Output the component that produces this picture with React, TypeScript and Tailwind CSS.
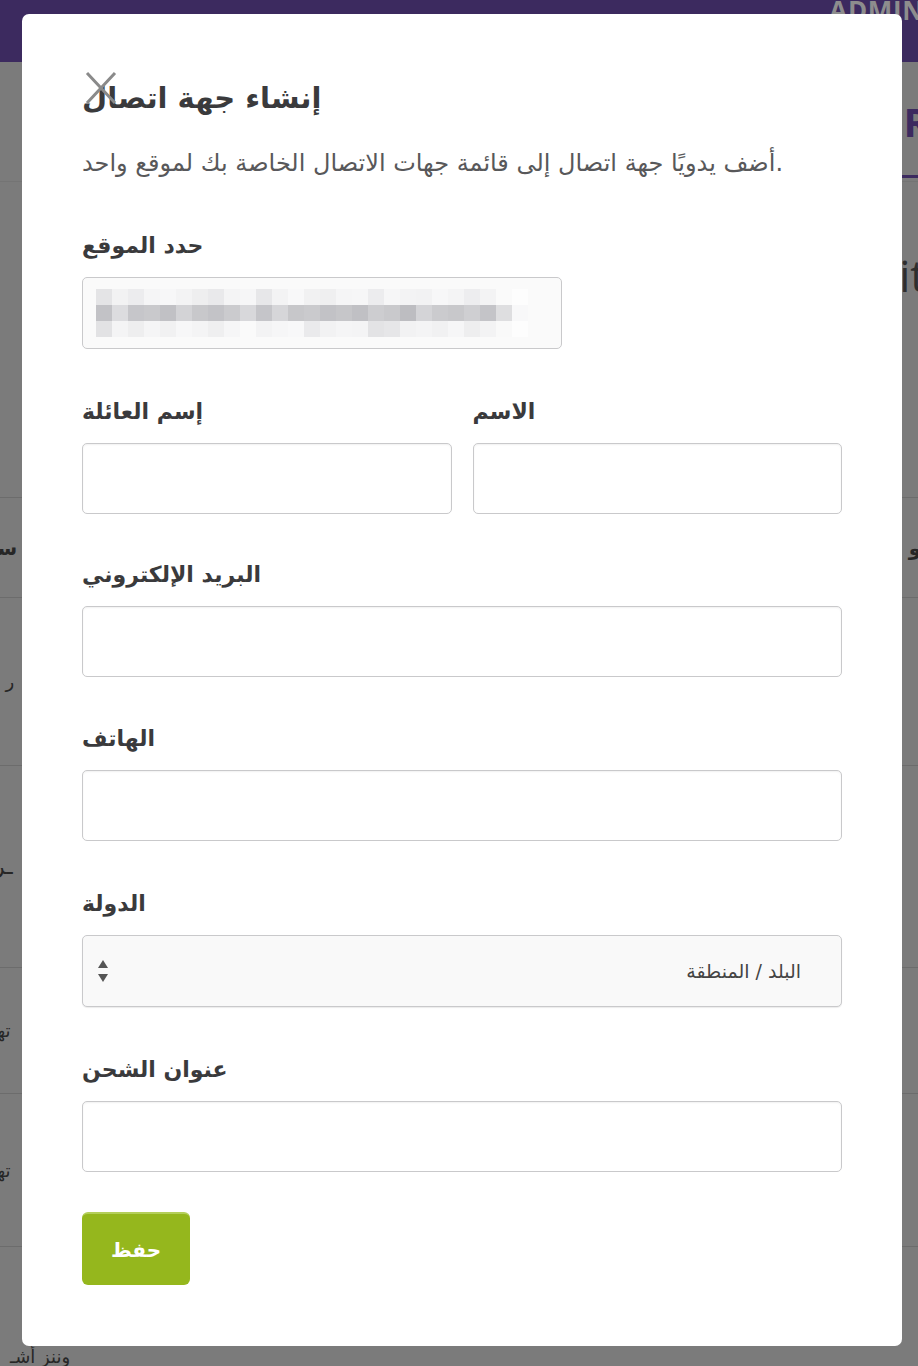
import React from 'react';

const ar = { fontFamily: '"DejaVu Sans", "Noto Sans", sans-serif' };

const blurRow1 = ['bg-[#e4e4e6]', 'bg-[#f2f2f3]', 'bg-[#ececee]', 'bg-[#f5f5f6]', 'bg-[#f7f7f8]', 'bg-[#f3f3f4]', 'bg-[#eeeeef]', 'bg-[#e9e9eb]', 'bg-[#f4f4f5]', 'bg-[#f6f6f7]', 'bg-[#e7e7e9]', 'bg-[#f3f3f4]', 'bg-[#f8f8f9]', 'bg-[#f1f1f2]', 'bg-[#efeff0]', 'bg-[#f5f5f6]', 'bg-[#f6f6f7]', 'bg-[#ececee]', 'bg-[#f6f6f7]', 'bg-[#f3f3f4]', 'bg-[#f2f2f3]', 'bg-[#f7f7f8]', 'bg-[#f4f4f5]', 'bg-[#ededef]', 'bg-[#f3f3f4]', 'bg-[#fafafa]', 'bg-[#fdfdfd]'];
const blurRow2 = ['bg-[#c2c2c6]', 'bg-[#dcdcdf]', 'bg-[#c6c6ca]', 'bg-[#c9c9cc]', 'bg-[#c1c1c5]', 'bg-[#d3d3d6]', 'bg-[#c8c8cb]', 'bg-[#c3c3c7]', 'bg-[#cbcbce]', 'bg-[#d8d8db]', 'bg-[#c5c5c9]', 'bg-[#d6d6d9]', 'bg-[#c7c7ca]', 'bg-[#cacacd]', 'bg-[#c2c2c6]', 'bg-[#c6c6c9]', 'bg-[#c0c0c4]', 'bg-[#cdcdd0]', 'bg-[#c9c9cc]', 'bg-[#bdbdc1]', 'bg-[#d4d4d7]', 'bg-[#cbcbce]', 'bg-[#c8c8cb]', 'bg-[#cfcfd2]', 'bg-[#c4c4c8]', 'bg-[#dedee0]', 'bg-[#f8f8f9]'];
const blurRow3 = ['bg-[#e2e2e4]', 'bg-[#f4f4f5]', 'bg-[#eeeeef]', 'bg-[#f5f5f6]', 'bg-[#f1f1f2]', 'bg-[#f7f7f8]', 'bg-[#f4f4f5]', 'bg-[#efeff0]', 'bg-[#f6f6f7]', 'bg-[#fafafa]', 'bg-[#f3f3f4]', 'bg-[#f6f6f7]', 'bg-[#f8f8f9]', 'bg-[#eaeaec]', 'bg-[#f2f2f3]', 'bg-[#f5f5f6]', 'bg-[#f4f4f5]', 'bg-[#e3e3e5]', 'bg-[#e6e6e8]', 'bg-[#f2f2f3]', 'bg-[#f4f4f5]', 'bg-[#f1f1f2]', 'bg-[#f6f6f7]', 'bg-[#eeeeef]', 'bg-[#f3f3f4]', 'bg-[#f9f9f9]', 'bg-[#fdfdfd]'];

const Label = ({ children }: { children: React.ReactNode }) => (
  <div className="h-[30px] leading-[30px] mb-[16px] text-[22px] font-bold text-[#3a3a3c]" style={ar}>
    {children}
  </div>
);

const Input = ({ className = '' }: { className?: string }) => (
  <div className={`h-[71px] rounded-[5px] border border-[#c9c9cb] bg-white shadow-[inset_0_1px_2px_rgba(0,0,0,0.06)] ${className}`} />
);

const BackgroundPage = () => (
  <div className="min-h-[1366px] bg-[#7b7b7b] flex flex-col">
    <div className="h-[62px] bg-[#3c2a5f] flex justify-end overflow-hidden">
      <span className="text-[#8d8d8d] text-[26px] font-bold tracking-wide -mt-[9px] -mr-[6px]" style={{ fontFamily: '"Open Sans", sans-serif' }}>
        ADMIN
      </span>
    </div>
    <div className="h-[120px] flex justify-end items-center border-b border-[#747474] relative">
      <span className="text-[#3c2a5f] text-[40px] font-bold mr-[-12px]" style={{ fontFamily: '"Open Sans", sans-serif' }}>R</span>
      <div className="absolute right-0 bottom-[3px] w-[34px] h-[3px] bg-[#3c2a5f]" />
    </div>
    <div className="h-[180px] flex justify-end pt-[60px]">
      <span className="text-[#2e2e2e] text-[44px] mr-[-8px]" style={{ fontFamily: '"Open Sans", sans-serif' }}>it</span>
    </div>
    <div className="h-[136px] border-b border-[#6c6c6c]" />
    <div className="h-[100px] border-b border-[#6c6c6c] flex items-center justify-between" style={ar}>
      <span className="text-[#262626] text-[20px] font-bold -ml-[10px]">سا</span>
      <span className="text-[#262626] text-[20px] font-bold -mr-[10px]">ـو</span>
    </div>
    <div className="h-[168px] border-b border-[#6c6c6c] flex items-center" style={ar}>
      <span className="text-[#262626] text-[18px] -ml-[14px]">ر وا</span>
    </div>
    <div className="h-[202px] border-b border-[#6c6c6c] flex items-center" style={ar}>
      <span className="text-[#262626] text-[22px] -ml-[6px]">ـر</span>
    </div>
    <div className="h-[126px] border-b border-[#6c6c6c] flex items-center" style={ar}>
      <span className="text-[#262626] text-[18px] -ml-[8px]">تهـ</span>
    </div>
    <div className="h-[153px] border-b border-[#6c6c6c] flex items-center" style={ar}>
      <span className="text-[#262626] text-[18px] -ml-[8px]">تهـ</span>
    </div>
    <div className="flex-1 flex items-end" style={ar}>
      <span className="text-[#262626] text-[18px] ml-[10px] -mb-[4px]">وننز أشـ</span>
    </div>
  </div>
);

export default function App() {
  return (
    <div className="relative w-[918px] h-[1366px] overflow-hidden">
      <BackgroundPage />

      <div className="absolute left-[22px] top-[14px] w-[880px] h-[1332px] bg-white rounded-[7px] px-[60px] pt-[64px]">
        <svg className="absolute left-[63px] top-[57px]" width="32" height="34" viewBox="0 0 32 34">
          <path d="M2 2 L30 32 M30 2 L2 32" stroke="#8a8a8a" strokeWidth="3" strokeLinecap="butt" fill="none" />
        </svg>

        <h1 className="h-[40px] leading-[40px] text-[29px] font-bold text-[#3a3a3c]" style={ar}>
          إنشاء جهة اتصال
        </h1>
        <p className="mt-[30px] h-[30px] leading-[30px] text-[24px] text-[#58585a]" style={ar}>
          أضف يدويًا جهة اتصال إلى قائمة جهات الاتصال الخاصة بك لموقع واحد.
        </p>

        <div className="mt-[53px]">
          <Label>حدد الموقع</Label>
          <div className="w-[480px] h-[72px] rounded-[5px] border border-[#c9c9cb] bg-[#fafafa] flex flex-col justify-center pl-[13px] overflow-hidden">
            <div className="flex h-[16px]">
              {blurRow1.map((c, i) => (
                <div key={i} className={`w-[16px] h-full ${c}`} />
              ))}
            </div>
            <div className="flex h-[16px]">
              {blurRow2.map((c, i) => (
                <div key={i} className={`w-[16px] h-full ${c}`} />
              ))}
            </div>
            <div className="flex h-[16px]">
              {blurRow3.map((c, i) => (
                <div key={i} className={`w-[16px] h-full ${c}`} />
              ))}
            </div>
          </div>
        </div>

        <div className="mt-[48px] grid grid-cols-2 gap-x-[21px]">
          <div>
            <Label>إسم العائلة</Label>
            <Input />
          </div>
          <div>
            <Label>الاسم</Label>
            <Input />
          </div>
        </div>

        <div className="mt-[46px]">
          <Label>البريد الإلكتروني</Label>
          <Input />
        </div>

        <div className="mt-[47px]">
          <Label>الهاتف</Label>
          <Input />
        </div>

        <div className="mt-[48px]">
          <Label>الدولة</Label>
          <div className="h-[72px] rounded-[5px] border border-[#c9c9cb] bg-[#f9f9f9] shadow-[0_1px_1px_rgba(0,0,0,0.08)] flex items-center justify-between pl-[14px] pr-[40px]">
            <svg width="12" height="30" viewBox="0 0 12 30">
              <path d="M6 4 L11 12 L1 12 Z" fill="#555" />
              <path d="M1 18 L11 18 L6 26 Z" fill="#555" />
            </svg>
            <span className="text-[19px] text-[#444]" style={ar}>البلد / المنطقة</span>
          </div>
        </div>

        <div className="mt-[48px]">
          <Label>عنوان الشحن</Label>
          <Input />
        </div>

        <button
          className="mt-[40px] w-[108px] h-[73px] rounded-[6px] bg-[#95b71d] border-t-2 border-[#b4cf5a] text-white text-[20px] font-bold flex items-center justify-center"
          style={ar}
        >
          حفظ
        </button>
      </div>
    </div>
  );
}
